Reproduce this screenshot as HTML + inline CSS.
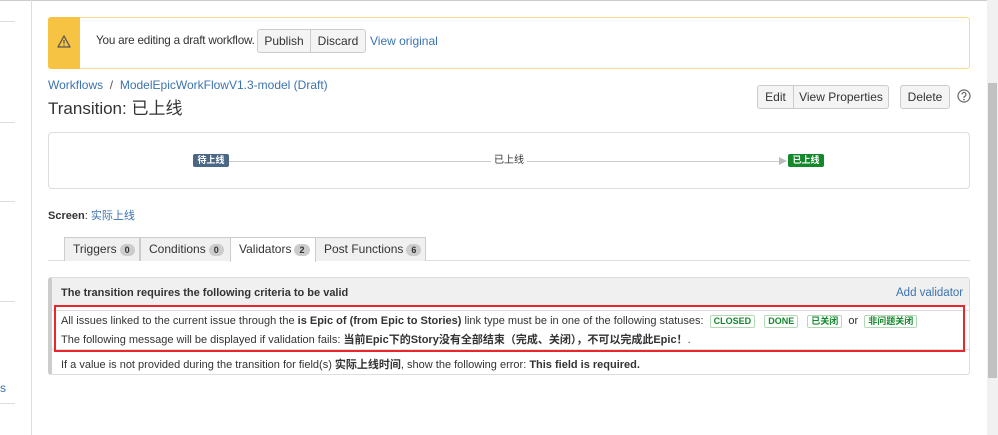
<!DOCTYPE html>
<html><head><meta charset="utf-8"><style>
*{box-sizing:border-box;margin:0;padding:0}
body{width:998px;height:435px;background:#fff;font-family:"Liberation Sans","Noto Sans CJK SC",sans-serif;font-size:12px;color:#333;position:relative;overflow:hidden}
.abs{position:absolute}
a{color:#3b73af;text-decoration:none}
.btn{position:absolute;background:#f4f4f4;border:1px solid #ccc;border-radius:3px;height:24px;line-height:22px;font-size:12px;color:#333;text-align:center}
.tab{position:absolute;top:237px;height:24px;background:#f0f0f0;border:1px solid #ccc;border-bottom:none;line-height:22px;font-size:12px;padding-left:8px}
.cnt{display:inline-block;background:#ccc;border-radius:8px;font-size:9px;font-weight:bold;padding:0 5px;line-height:12px;color:#333;margin-left:3px}
.lz{display:inline-block;border:1px solid #b3d9b3;color:#14892c;font-size:9px;font-weight:bold;padding:0 3px;line-height:11px;border-radius:2px;margin:0 3px}
</style></head><body>
<div class="abs" style="left:0;top:0;width:998px;height:1px;background:#ccc"></div>
<div class="abs" style="left:31px;top:0;width:1px;height:435px;background:#ddd"></div>
<div class="abs" style="left:0;top:21px;width:15px;height:1px;background:#ddd"></div>
<div class="abs" style="left:0;top:122px;width:15px;height:1px;background:#ddd"></div>
<div class="abs" style="left:0;top:201px;width:15px;height:1px;background:#ddd"></div>
<div class="abs" style="left:0;top:301px;width:15px;height:1px;background:#ddd"></div>
<div class="abs" style="left:0;top:403px;width:15px;height:1px;background:#ddd"></div>
<div class="abs" style="left:0;top:381px;color:#3b73af;font-size:12px">s</div>
<div class="abs" style="left:987px;top:0;width:11px;height:435px;background:#f1f1f1"></div>
<div class="abs" style="left:988px;top:83px;width:9px;height:295px;background:#c1c1c1"></div>

<div class="abs" style="left:48px;top:17px;width:922px;height:52px;border:1px solid #f9dc8f;border-radius:3px;background:#fff"></div>
<div class="abs" style="left:48px;top:17px;width:32px;height:52px;background:#f6c342;border-radius:3px 0 0 3px"></div>
<svg class="abs" style="left:57px;top:35px" width="14" height="13" viewBox="0 0 14 13"><path d="M7 1 L13 12 L1 12 Z" fill="none" stroke="#555" stroke-width="1.3" stroke-linejoin="round"/><path d="M7 5v3.5M7 9.7v1" stroke="#555" stroke-width="1.3"/></svg>
<div class="abs" style="left:96px;top:34px;font-size:11.7px;letter-spacing:-0.2px">You are editing a draft workflow.</div>
<div class="btn" style="left:257px;top:29px;width:54px;border-radius:3px 0 0 3px">Publish</div>
<div class="btn" style="left:310px;top:29px;width:56px;border-radius:0 3px 3px 0">Discard</div>
<a class="abs" style="left:370px;top:34px">View original</a>

<div class="abs" style="left:48px;top:78px;font-size:12px"><a>Workflows</a> <span style="color:#555">&nbsp;/&nbsp;</span> <a>ModelEpicWorkFlowV1.3-model (Draft)</a></div>
<div class="abs" style="left:48px;top:94px;font-size:17px;color:#333">Transition: 已上线</div>
<div class="btn" style="left:757px;top:85px;width:37px;border-radius:3px 0 0 3px">Edit</div>
<div class="btn" style="left:793px;top:85px;width:96px;border-radius:0 3px 3px 0">View Properties</div>
<div class="btn" style="left:900px;top:85px;width:50px">Delete</div>
<svg class="abs" style="left:957px;top:89px" width="14" height="14" viewBox="0 0 14 14"><circle cx="7" cy="7" r="6" fill="none" stroke="#666" stroke-width="1.2"/><path d="M5 5.5a2 2 0 1 1 2.5 1.9c-.4.2-.5.5-.5 1v.6" fill="none" stroke="#666" stroke-width="1.2"/><circle cx="7" cy="10.6" r=".8" fill="#666"/></svg>

<div class="abs" style="left:48px;top:132px;width:922px;height:57px;border:1px solid #ddd;border-radius:4px"></div>
<div class="abs" style="left:229px;top:161px;width:550px;height:1px;background:#ccc"></div>
<div class="abs" style="left:779px;top:157px;width:0;height:0;border-left:8px solid #bbb;border-top:4px solid transparent;border-bottom:4px solid transparent"></div>
<div class="abs" style="left:193px;top:154px;width:36px;height:13px;background:#4a6785;color:#fff;font-size:9px;font-weight:bold;line-height:13px;text-align:center;border-radius:2px">待上线</div>
<div class="abs" style="left:491px;top:154px;font-size:10px;background:#fff;padding:0 3px;line-height:13px">已上线</div>
<div class="abs" style="left:788px;top:154px;width:36px;height:13px;background:#14892c;color:#fff;font-size:9px;font-weight:bold;line-height:13px;text-align:center;border-radius:2px">已上线</div>

<div class="abs" style="left:48px;top:207px;font-size:11px"><b>Screen</b>: <a>实际上线</a></div>

<div class="abs" style="left:48px;top:260px;width:922px;height:1px;background:#ddd"></div>
<div class="tab" style="left:64px;width:76px">Triggers<span class="cnt">0</span></div>
<div class="tab" style="left:140px;width:91px">Conditions<span class="cnt">0</span></div>
<div class="tab" style="left:230px;width:86px;background:#fff;height:25px">Validators<span class="cnt">2</span></div>
<div class="tab" style="left:315px;width:111px">Post Functions<span class="cnt">6</span></div>

<div class="abs" style="left:48px;top:277px;width:922px;height:98px;border:1px solid #ddd;border-left:4px solid #ccc;border-radius:3px"></div>
<div class="abs" style="left:52px;top:278px;width:917px;height:28px;background:#f0f0f0"></div>
<div class="abs" style="left:61px;top:287px;font-size:11px;font-weight:bold">The transition requires the following criteria to be valid</div>
<a class="abs" style="left:896px;top:287px;font-size:11.5px">Add validator</a>
<div class="abs" style="left:52px;top:310px;width:917px;height:40px;border-top:1px solid #ddd;border-bottom:1px solid #ddd"></div>
<div class="abs" style="left:61px;top:315px;font-size:11px;white-space:nowrap">All issues linked to the current issue through the <b>is Epic of (from Epic to Stories)</b> link type must be in one of the following statuses: <span class="lz">CLOSED</span> <span class="lz">DONE</span> <span class="lz">已关闭</span> or <span class="lz">非问题关闭</span></div>
<div class="abs" style="left:61px;top:331px;font-size:11px;white-space:nowrap">The following message will be displayed if validation fails: <b>当前Epic下的Story没有全部结束（完成、关闭），不可以完成此Epic！</b>.</div>
<div class="abs" style="left:61px;top:356px;font-size:11px;white-space:nowrap">If a value is not provided during the transition for field(s) <b>实际上线时间</b>, show the following error: <b>This field is required.</b></div>
<div class="abs" style="left:54px;top:305px;width:911px;height:47px;border:2px solid #e8262b"></div>
</body></html>
